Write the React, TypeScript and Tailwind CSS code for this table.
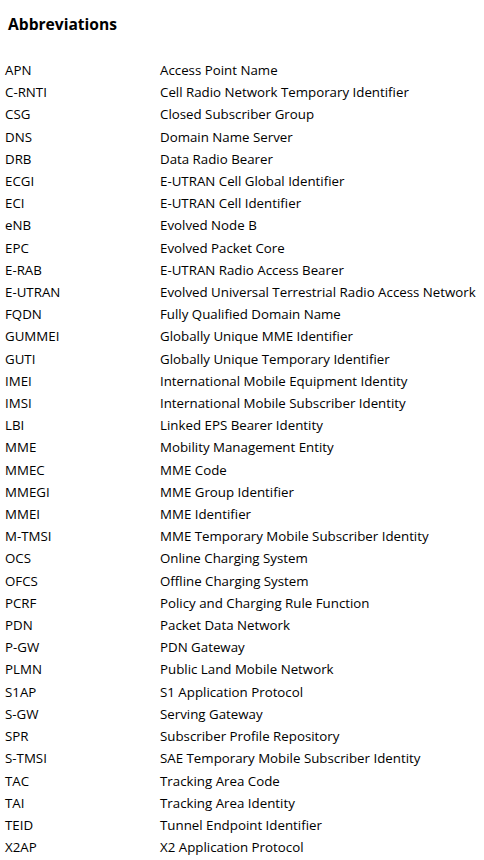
const rows: [string, string][] = [
  ["APN", "Access Point Name"],
  ["C-RNTI", "Cell Radio Network Temporary Identifier"],
  ["CSG", "Closed Subscriber Group"],
  ["DNS", "Domain Name Server"],
  ["DRB", "Data Radio Bearer"],
  ["ECGI", "E-UTRAN Cell Global Identifier"],
  ["ECI", "E-UTRAN Cell Identifier"],
  ["eNB", "Evolved Node B"],
  ["EPC", "Evolved Packet Core"],
  ["E-RAB", "E-UTRAN Radio Access Bearer"],
  ["E-UTRAN", "Evolved Universal Terrestrial Radio Access Network"],
  ["FQDN", "Fully Qualified Domain Name"],
  ["GUMMEI", "Globally Unique MME Identifier"],
  ["GUTI", "Globally Unique Temporary Identifier"],
  ["IMEI", "International Mobile Equipment Identity"],
  ["IMSI", "International Mobile Subscriber Identity"],
  ["LBI", "Linked EPS Bearer Identity"],
  ["MME", "Mobility Management Entity"],
  ["MMEC", "MME Code"],
  ["MMEGI", "MME Group Identifier"],
  ["MMEI", "MME Identifier"],
  ["M-TMSI", "MME Temporary Mobile Subscriber Identity"],
  ["OCS", "Online Charging System"],
  ["OFCS", "Offline Charging System"],
  ["PCRF", "Policy and Charging Rule Function"],
  ["PDN", "Packet Data Network"],
  ["P-GW", "PDN Gateway"],
  ["PLMN", "Public Land Mobile Network"],
  ["S1AP", "S1 Application Protocol"],
  ["S-GW", "Serving Gateway"],
  ["SPR", "Subscriber Profile Repository"],
  ["S-TMSI", "SAE Temporary Mobile Subscriber Identity"],
  ["TAC", "Tracking Area Code"],
  ["TAI", "Tracking Area Identity"],
  ["TEID", "Tunnel Endpoint Identifier"],
  ["X2AP", "X2 Application Protocol"],
];

export default function App() {
  return (
    <div className="min-h-screen bg-white text-black font-['Open_Sans',sans-serif]">
      {/* Heading */}
      <h1 className="pl-[8px] pt-[12px] text-[15.6px] font-bold leading-[24px]">Abbreviations</h1>

      {/* Abbreviation table */}
      <div className="mt-[23px] grid grid-cols-[155px_1fr] pl-[5px] text-[13.3px] leading-[22.2px]">
        {rows.map(([abbr, full]) => (
          <div key={abbr} className="contents">
            <span>{abbr}</span>
            <span className="whitespace-nowrap">{full}</span>
          </div>
        ))}
      </div>
    </div>
  );
}
